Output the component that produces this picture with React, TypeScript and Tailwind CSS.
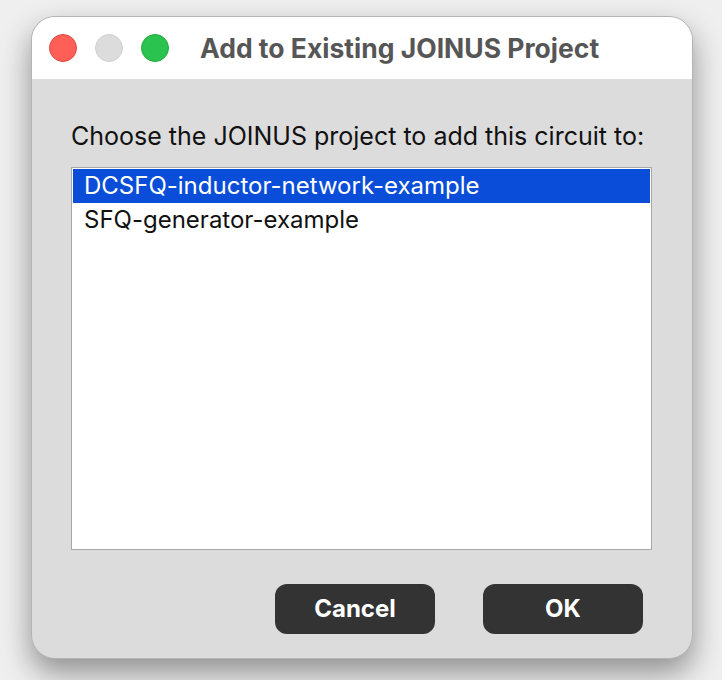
import React from "react";

export default function App() {
  const font = { fontFamily: "Inter, 'Liberation Sans', sans-serif" };
  return (
    <div className="w-[722px] h-[680px] bg-[#efefef] pt-[16px] pl-[31px]" style={font}>
      <div className="w-[662px] h-[643px] rounded-[24px] border border-[#b4b4b4] bg-[#dcdcdc] shadow-[0_14px_30px_rgba(0,0,0,0.4)] flex flex-col overflow-hidden">
        <div className="h-[62px] bg-white flex items-center pl-[17px] shrink-0">
          <div className="w-[28px] h-[28px] rounded-full bg-[#ff5f57] border border-[#e2463f]" />
          <div className="w-[28px] h-[28px] rounded-full bg-[#dcdcdc] border border-[#d0d0d0] ml-[18px]" />
          <div className="w-[28px] h-[28px] rounded-full bg-[#2ac350] border border-[#1eab3c] ml-[18px]" />
          <div className="ml-[31px] text-[26.5px] font-bold text-[#565656] leading-none mt-[1px]">Add to Existing JOINUS Project</div>
        </div>
        <div className="flex-1 flex flex-col px-[39px]">
          <div className="mt-[42px] text-[25px] text-[#111] leading-[30px]">Choose the JOINUS project to add this circuit to:</div>
          <div className="mt-[16px] w-[581px] h-[383px] bg-white border border-[#a8a8a8] p-[1px]">
            <div className="h-[34px] bg-[#0a4dd8] text-white text-[24px] flex items-center pl-[11px]">DCSFQ-inductor-network-example</div>
            <div className="h-[34px] text-[#111] text-[24px] flex items-center pl-[11px]">SFQ-generator-example</div>
          </div>
          <div className="flex justify-end gap-[48px] mt-[34px] pr-[10px]">
            <button className="w-[160px] h-[50px] rounded-[12px] bg-[#333333] text-white text-[24px] font-bold">Cancel</button>
            <button className="w-[160px] h-[50px] rounded-[12px] bg-[#333333] text-white text-[24px] font-bold">OK</button>
          </div>
        </div>
      </div>
    </div>
  );
}
